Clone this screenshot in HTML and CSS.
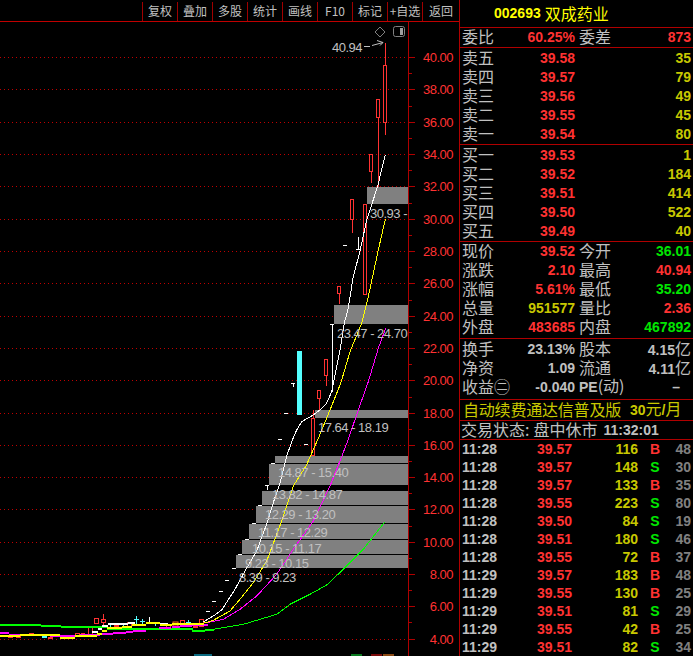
FILE: index.html
```html
<!DOCTYPE html>
<html lang="zh-CN">
<head>
<meta charset="utf-8">
<title>002693 双成药业</title>
<link rel="stylesheet" href="styles.css">
</head>
<body>
<div class="app">
  <section class="chart-pane">
    <nav class="toolbar">
      <span class="tool">复权</span><span class="tool">叠加</span><span class="tool">多股</span><span class="tool">统计</span><span class="tool">画线</span><span class="tool">F10</span><span class="tool">标记</span><span class="tool">+自选</span><span class="tool tool-last">返回</span>
    </nav>
    <svg class="chart" viewBox="0 22 459 634" width="459" height="634">
      <g class="grid">
        <path d="M0 57.5H408M0 89.5H408M0 122.5H408M0 154.5H408M0 186.5H408M0 219.5H408M0 251.5H408M0 283.5H408M0 316.5H408M0 348.5H408M0 380.5H408M0 413.5H408M0 445.5H408M0 477.5H408M0 509.5H408M0 542.5H408M0 574.5H408M0 606.5H408M0 639.5H408"/>
      </g>
      <path class="axis" d="M408.5 22V656"/>
      <path class="ticks" d="M409 57.5h6M409 73.5h3M409 89.5h6M409 106.5h3M409 122.5h6M409 138.5h3M409 154.5h6M409 170.5h3M409 186.5h6M409 203.5h3M409 219.5h6M409 235.5h3M409 251.5h6M409 267.5h3M409 283.5h6M409 300.5h3M409 316.5h6M409 332.5h3M409 348.5h6M409 364.5h3M409 380.5h6M409 397.5h3M409 413.5h6M409 429.5h3M409 445.5h6M409 461.5h3M409 477.5h6M409 493.5h3M409 509.5h6M409 526.5h3M409 542.5h6M409 558.5h3M409 574.5h6M409 590.5h3M409 606.5h6M409 622.5h3M409 639.5h6"/>
      <g class="axis-labels">
        <text x="453" y="62">40.00</text><text x="453" y="94">38.00</text><text x="453" y="127">36.00</text><text x="453" y="159">34.00</text><text x="453" y="191">32.00</text><text x="453" y="224">30.00</text><text x="453" y="256">28.00</text><text x="453" y="288">26.00</text><text x="453" y="321">24.00</text><text x="453" y="353">22.00</text><text x="453" y="385">20.00</text><text x="453" y="418">18.00</text><text x="453" y="450">16.00</text><text x="453" y="482">14.00</text><text x="453" y="514">12.00</text><text x="453" y="547">10.00</text><text x="453" y="579">8.00</text><text x="453" y="611">6.00</text><text x="453" y="644">4.00</text>
      </g>
      <g class="candle">
        <path d="M385.5 43V65M385.5 122V135M378.5 117V187M371.5 171V183M352.5 219V233M339.5 293V304M326.5 375V386M319.5 398V410M313.5 410V418M103.5 614V626"/>
        <rect x="383.5" y="65.5" width="3" height="57"/>
        <rect x="376.5" y="99.5" width="3" height="18"/>
        <rect x="369.5" y="154.5" width="3" height="17"/>
        <rect x="363.5" y="204.5" width="3" height="90"/>
        <rect x="350.5" y="199.5" width="3" height="20"/>
        <rect x="337.5" y="286.5" width="3" height="7"/>
        <rect x="324.5" y="359.5" width="3" height="16"/>
        <rect x="317.5" y="390.5" width="3" height="8"/>
        <rect x="311.5" y="418.5" width="3" height="37"/>
        <rect x="94.5" y="618.5" width="4" height="5"/>
        <rect x="101.5" y="619.5" width="4" height="3"/>
        <rect x="88.5" y="626.5" width="4" height="8"/>
        <rect x="75.5" y="633.5" width="4" height="2"/>
        <rect x="127.5" y="622.5" width="4" height="4"/>
        <rect x="166.5" y="624.5" width="4" height="3"/>
        <rect x="180.5" y="620.5" width="4" height="4"/>
        <rect x="199.5" y="619.5" width="4" height="7"/>
      </g>
      <g class="candle-fill">
        <rect x="81" y="633" width="4" height="2"/>
        <rect x="114" y="625" width="5" height="2"/>
        <rect x="193" y="625" width="5" height="3"/>
        <rect x="8" y="636" width="5" height="2"/>
        <rect x="16" y="636" width="5" height="2"/>
        <rect x="29" y="633" width="5" height="2"/>
        <rect x="48" y="637" width="5" height="2"/>
      </g>
      <rect class="orange" x="173" y="622" width="5" height="4"/>
      <g class="blocks">
        <rect x="367" y="187" width="41" height="17"/>
        <rect x="334" y="305" width="74" height="19"/>
        <rect x="315" y="410" width="93" height="8"/>
        <rect x="275" y="456" width="133" height="7"/>
        <rect x="269" y="464" width="139" height="21"/>
        <rect x="262" y="491" width="146" height="14"/>
        <rect x="256" y="506" width="152" height="17"/>
        <rect x="249" y="524" width="159" height="15"/>
        <rect x="242" y="540" width="166" height="14"/>
        <rect x="236" y="555" width="172" height="13"/>
      </g>
      <g class="cyan-marks">
        <rect class="cyan-fill" x="297" y="351" width="5" height="64"/>
        <rect class="cyan-fill" x="35" y="634" width="5" height="1"/>
        <rect class="cyan-fill" x="42" y="635" width="5" height="3"/>
        <rect class="cyan-fill" x="108" y="623" width="5" height="2"/>
        <rect class="cyan-fill" x="160" y="625" width="5" height="1"/>
        <path d="M136.5 616V624M134 619.5h5M142.5 619V625M140 621.5h5M188.5 620V625M186 622.5h5M123.5 625V628M155.5 623V626M110.5 623V627"/>
      </g>
      <path class="white-marks" d="M343 245.5h4M356 249.5h5M358.5 237V249M330 324.5h4M332.5 324V392M291 383.5h4M293.5 383V387M284 413.5h4M278 439.5h4M304 444.5h4M271 463.5h4M265 485.5h4M267.5 485V490M258 505.5h4M252 523.5h4M245 539.5h4M238 554.5h4M232 568.5h4M225 580.5h4M219 591.5h4M212 601.5h4M206 611.5h4M149.5 617V624"/>
      <polyline class="ma ma-green" points="385,521.7 363.3,549.3 345,567.7 326.7,585 310,594.3 290,604.3 276.7,614.3 260,619.3 243.3,624.3 226.7,627 213.3,629.3 204,631"/>
      <path class="step step-green" d="M0 625H41M41 625.5H61M61 626.5H81M81 627H107M107 628.5H133M133 629H193M192 630.5H205M205 630H214"/>
      <polyline class="ma ma-magenta" points="385.7,328.3 378.3,348.3 368.3,381.7 358.3,410 348.3,439.3 340,461 330,486 313.3,521 293.3,549.3 276.7,574.3 256.7,596 240,609.3 223.3,619.3 206.7,622.7"/>
      <path class="step step-magenta" d="M0 633H9M9 634.5H30M30 635H50M50 635.5H80M80 635H100M100 633.5H113M113 632.5H126M126 631.5H133M133 630.5H146M159 627.5H171M172 626.5H180M180 625.5H192M192 624.5H208"/>
      <polyline class="ma ma-white" points="385.3,154.5 377.7,186 372,203.7 366.7,220 360,251 353,278 348.3,308 344.3,323 340,350 336.7,366.7 331.7,391.7 326,404.3 320,410 313.3,415 301.7,421.7 296.7,430 292.7,439.3 286.7,456 280,482.7 273.3,502.7 266.7,524 256.7,551 245,571 235,589.3 221.7,610 213.3,616 203.3,622"/>
      <path class="step step-white" d="M92 632H98M98 629H102M102 626H108M108 623.5H128M128 622.5H135M152 622.5H160M160 623.5H168M172 623.5H190"/>
      <polyline class="ma ma-yellow" points="385.3,219.3 378.3,250 368.3,296.7 361.7,323.3 350,351.7 340.7,383.3 330,410 319.3,436 306,466 293.3,486 281.7,521 266.7,561 253.3,582.7 240,599.3 230,611 213.3,620.3 203.3,623.3"/>
      <path class="step step-yellow" d="M0 635.5H20M20 634.5H60M60 637.5H75M75 635.5H97M97 633.5H102M102 630.5H107M107 627.5H122M122 626.5H132M132 624.5H146M146 622.5H160M160 624.5H172M172 623.5H204"/>
      <g class="labels">
        <text x="332" y="52">40.94</text>
        <text x="370" y="217.5">30.93 -</text>
        <text x="337" y="338">23.47 - 24.70</text>
        <text x="318" y="432">17.64 - 18.19</text>
        <text x="278" y="476.5">14.87 - 15.40</text>
        <text x="272" y="499">13.82 - 14.87</text>
        <text x="265" y="518.5">12.29 - 13.20</text>
        <text x="258" y="537">11.17 - 12.29</text>
        <text x="252" y="552.5">10.15 - 11.17</text>
        <text x="245" y="567.5">9.23 - 10.15</text>
        <text x="239" y="582">8.39 - 9.23</text>
      </g>
      <path class="arrow" d="M364 46.5h6M372 45.5l11-3M377 40.5l6 2-3 3"/>
      <path class="diamond" d="M380 27l5 5-5 5-5-5z"/>
      <rect class="toggle" x="393.5" y="26.5" width="11" height="10" rx="2"/>
      <rect class="toggle-bar" x="400" y="28" width="3" height="7"/>
      <rect class="flag-teal" x="194" y="654" width="18" height="2"/>
      <rect class="flag-green" x="351" y="654" width="11" height="2"/>
      <rect class="flag-red" x="371" y="654" width="11" height="2"/>
      <rect class="flag-brown" x="383" y="654" width="11" height="2"/>
    </svg>
  </section>

  <aside class="panel">
    <header class="title"><span class="code num">002693</span><span class="name">双成药业</span></header>
    <div class="block b-ratio">
      <div class="row"><span class="lb">委比</span><span class="num red">60.25%</span><span class="lb lb2">委差</span><span class="num red">873</span></div>
    </div>
    <div class="block pad-top">
      <div class="row"><span class="lb">卖五</span><span class="num red">39.58</span><span></span><span class="num yel">35</span></div>
      <div class="row"><span class="lb">卖四</span><span class="num red">39.57</span><span></span><span class="num yel">79</span></div>
      <div class="row"><span class="lb">卖三</span><span class="num red">39.56</span><span></span><span class="num yel">49</span></div>
      <div class="row"><span class="lb">卖二</span><span class="num red">39.55</span><span></span><span class="num yel">45</span></div>
      <div class="row"><span class="lb">卖一</span><span class="num red">39.54</span><span></span><span class="num yel">80</span></div>
    </div>
    <div class="block pad-top">
      <div class="row"><span class="lb">买一</span><span class="num red">39.53</span><span></span><span class="num yel">1</span></div>
      <div class="row"><span class="lb">买二</span><span class="num red">39.52</span><span></span><span class="num yel">184</span></div>
      <div class="row"><span class="lb">买三</span><span class="num red">39.51</span><span></span><span class="num yel">414</span></div>
      <div class="row"><span class="lb">买四</span><span class="num red">39.50</span><span></span><span class="num yel">522</span></div>
      <div class="row"><span class="lb">买五</span><span class="num red">39.49</span><span></span><span class="num yel">40</span></div>
    </div>
    <div class="block pad-bottom">
      <div class="row"><span class="lb">现价</span><span class="num red">39.52</span><span class="lb lb2">今开</span><span class="num grn">36.01</span></div>
      <div class="row"><span class="lb">涨跌</span><span class="num red">2.10</span><span class="lb lb2">最高</span><span class="num red">40.94</span></div>
      <div class="row"><span class="lb">涨幅</span><span class="num red">5.61%</span><span class="lb lb2">最低</span><span class="num grn">35.20</span></div>
      <div class="row"><span class="lb">总量</span><span class="num yel">951577</span><span class="lb lb2">量比</span><span class="num red">2.36</span></div>
      <div class="row"><span class="lb">外盘</span><span class="num red">483685</span><span class="lb lb2">内盘</span><span class="num grn">467892</span></div>
    </div>
    <div class="block b-finance">
      <div class="row"><span class="lb">换手</span><span class="num gry">23.13%</span><span class="lb lb2">股本</span><span class="num gry">4.15<span class="unit">亿</span></span></div>
      <div class="row"><span class="lb">净资</span><span class="num gry">1.09</span><span class="lb lb2">流通</span><span class="num gry">4.11<span class="unit">亿</span></span></div>
      <div class="row"><span class="lb">收益㊁</span><span class="num gry">-0.040</span><span class="lb lb2"><span class="num gry">PE</span>(动)</span><span class="num gry dash">–</span></div>
    </div>
    <div class="block ad"><span class="ad-text">自动续费通达信普及版</span><span class="ad-price"><span class="num">30</span>元<span class="num">/</span>月</span></div>
    <div class="block state"><span class="lb">交易状态:</span><span class="lb st-val">盘中休市</span><span class="num gry st-time">11:32:01</span></div>
    <div class="trades">
      <div class="tr"><span class="num gry">11:28</span><span class="num red">39.57</span><span class="num yel">116</span><span class="num bs red">B</span><span class="num dim">48</span></div>
      <div class="tr"><span class="num gry">11:28</span><span class="num red">39.57</span><span class="num yel">148</span><span class="num bs grn">S</span><span class="num dim">30</span></div>
      <div class="tr"><span class="num gry">11:28</span><span class="num red">39.57</span><span class="num yel">133</span><span class="num bs red">B</span><span class="num dim">35</span></div>
      <div class="tr"><span class="num gry">11:28</span><span class="num red">39.55</span><span class="num yel">223</span><span class="num bs grn">S</span><span class="num dim">80</span></div>
      <div class="tr"><span class="num gry">11:28</span><span class="num red">39.50</span><span class="num yel">84</span><span class="num bs grn">S</span><span class="num dim">19</span></div>
      <div class="tr"><span class="num gry">11:28</span><span class="num red">39.51</span><span class="num yel">180</span><span class="num bs grn">S</span><span class="num dim">46</span></div>
      <div class="tr"><span class="num gry">11:28</span><span class="num red">39.55</span><span class="num yel">72</span><span class="num bs red">B</span><span class="num dim">37</span></div>
      <div class="tr"><span class="num gry">11:29</span><span class="num red">39.57</span><span class="num yel">183</span><span class="num bs red">B</span><span class="num dim">48</span></div>
      <div class="tr"><span class="num gry">11:29</span><span class="num red">39.55</span><span class="num yel">130</span><span class="num bs red">B</span><span class="num dim">25</span></div>
      <div class="tr"><span class="num gry">11:29</span><span class="num red">39.51</span><span class="num yel">81</span><span class="num bs grn">S</span><span class="num dim">29</span></div>
      <div class="tr"><span class="num gry">11:29</span><span class="num red">39.55</span><span class="num yel">42</span><span class="num bs red">B</span><span class="num dim">25</span></div>
      <div class="tr"><span class="num gry">11:29</span><span class="num red">39.51</span><span class="num yel">82</span><span class="num bs grn">S</span><span class="num dim">34</span></div>
    </div>
  </aside>
</div>
</body>
</html>
```
FILE: styles.css
```css
* { box-sizing: border-box; }
html, body { margin: 0; padding: 0; background: #000; }
body { width: 693px; height: 656px; overflow: hidden; font-family: "Noto Sans CJK SC", "Liberation Sans", sans-serif; color: #c0c0c0; }
.app { display: flex; width: 693px; height: 656px; }

/* left chart */
.chart-pane { width: 459px; flex: none; display: flex; flex-direction: column; }
.toolbar { height: 22px; flex: none; display: flex; justify-content: flex-end; border-bottom: 1px solid #c00000; padding-top: 2px; }
.tool { width: 35px; border-left: 1px solid #a00000; font-size: 12px; line-height: 18px; text-align: center; color: #c0c0c0; }
.tool-last { width: 37px; }
.chart { display: block; flex: none; }
.grid path { fill: none; stroke: #c00000; stroke-width: 1; stroke-dasharray: 1 3; }
.axis { stroke: #b00000; stroke-width: 1; fill: none; }
.ticks { stroke: #b00000; stroke-width: 1; fill: none; }
.axis-labels text { font: 13px "Liberation Sans", sans-serif; letter-spacing: -0.5px; fill: #ff3232; text-anchor: end; }
.candle { fill: #000; stroke: #ff3232; stroke-width: 1; shape-rendering: crispEdges; }
.candle-fill { fill: #ff3232; }
.orange { fill: none; stroke: #ff6a1a; }
.blocks { fill: #808080; }
.cyan-fill { fill: #54ffff; }
.cyan-marks path { fill: none; stroke: #54ffff; stroke-width: 1; }
.white-marks { fill: none; stroke: #fff; stroke-width: 1; shape-rendering: crispEdges; }
.ma { fill: none; stroke-width: 1; shape-rendering: crispEdges; }
.step { fill: none; stroke-width: 2; shape-rendering: crispEdges; }
.ma-white, .step-white { stroke: #fff; }
.ma-yellow, .step-yellow { stroke: #ffff00; }
.ma-magenta, .step-magenta { stroke: #ff00ff; }
.ma-green, .step-green { stroke: #00ff00; }
.labels text { font: 13px "Liberation Sans", sans-serif; letter-spacing: -0.5px; fill: #c0c0c0; }
.arrow { fill: none; stroke: #c0c0c0; stroke-width: 1; }
.diamond { fill: none; stroke: #808080; stroke-width: 1; }
.toggle { fill: #000; stroke: #808080; stroke-width: 1; }
.toggle-bar { fill: #a0a0a0; }
.flag-teal { fill: #0a6a80; }
.flag-green { fill: #0a7a20; }
.flag-red { fill: #7a0a0a; }
.flag-brown { fill: #8b4a14; }

/* right panel */
.panel { width: 234px; flex: none; display: flex; flex-direction: column; border-left: 1px solid #b00000; }
.title { height: 28px; flex: none; border-bottom: 1px solid #b00000; display: flex; align-items: center; padding-left: 34px; color: #ffff00; }
.code { color: #ffff00; margin-right: 4px; }
.name { font-size: 16px; line-height: 27px; }
.block { flex: none; border-bottom: 1px solid #b00000; }
.b-ratio { height: 20px; }
.pad-top { padding-top: 1px; height: 97px; }
.pad-bottom { height: 97px; }
.b-finance { height: 61px; padding-top: 1px; }
.row { display: grid; grid-template-columns: 31px 82px 42px 74px; grid-auto-rows: 19px; height: 19px; padding-left: 2px; align-items: center; }
.lb { font-size: 16px; line-height: 17px; padding-bottom: 2px; white-space: nowrap; color: #c0c0c0; }
.lb2 { padding-left: 4px; }
.num { font: bold 14px/19px "Liberation Sans", sans-serif; text-align: right; white-space: nowrap; }
.red { color: #ff3232; }
.yel { color: #c8c800; }
.grn { color: #00e600; }
.gry { color: #c0c0c0; }
.dim { color: #808080; }
.unit { font: 16px/17px "Noto Sans CJK SC", sans-serif; }
.lb .num { line-height: 17px; }
.dash { padding-right: 11px; }
.ad { height: 21px; display: flex; align-items: center; padding-left: 3px; padding-bottom: 2px; color: #c8c800; font-size: 16px; line-height: 17px; letter-spacing: -0.2px; }
.ad-text { width: 167px; white-space: nowrap; }
.ad-price { white-space: nowrap; letter-spacing: 0; }
.ad-price .num { line-height: 17px; }
.state { height: 19px; display: flex; align-items: center; padding-left: 1px; }
.st-val { margin-left: 4px; }
.st-time { margin-left: 6px; }
.trades { flex: 1; overflow: hidden; }
.tr { display: grid; grid-template-columns: 40px 70px 66px 34px 19px; height: 18px; padding-left: 2px; align-items: center; }
.tr .num { line-height: 18px; }
.tr .num:first-child { text-align: left; }
.tr .bs { text-align: center; }
```
